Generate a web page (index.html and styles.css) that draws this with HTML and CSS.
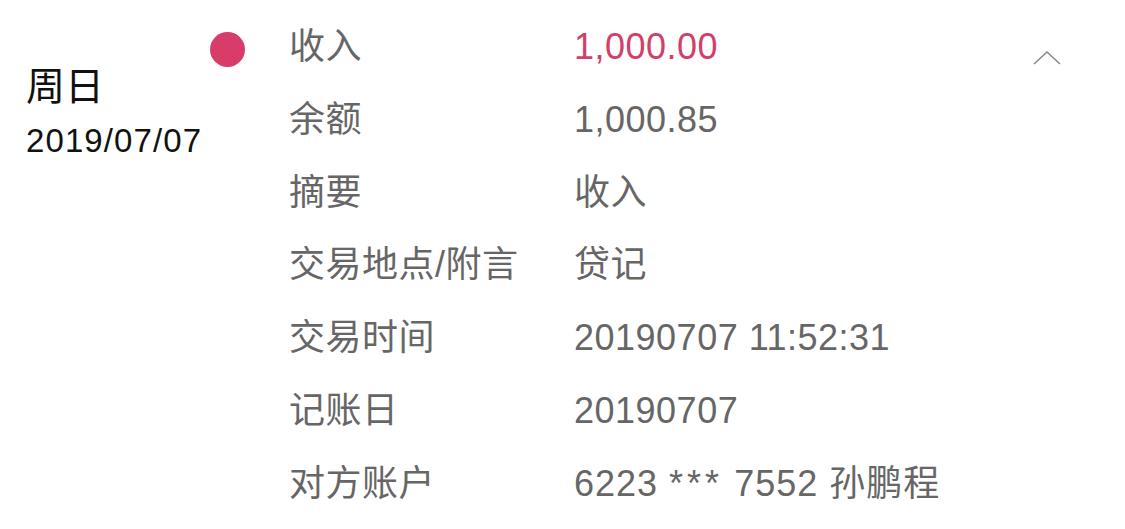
FILE: index.html
```html
<!DOCTYPE html>
<html lang="zh">
<head>
<meta charset="utf-8">
<link rel="stylesheet" href="styles.css">
</head>
<body>
<div class="item">
  <div class="day">
    <div class="weekday">周日</div>
    <div class="date">2019/07/07</div>
  </div>
  <div class="marker"><span class="dot"></span></div>
  <div class="details">
    <div class="row"><span class="label">收入</span><span class="value income">1,000.00</span></div>
    <div class="row"><span class="label">余额</span><span class="value">1,000.85</span></div>
    <div class="row"><span class="label">摘要</span><span class="value">收入</span></div>
    <div class="row"><span class="label">交易地点/附言</span><span class="value">贷记</span></div>
    <div class="row"><span class="label">交易时间</span><span class="value">20190707 11:52:31</span></div>
    <div class="row"><span class="label">记账日</span><span class="value">20190707</span></div>
    <div class="row"><span class="label">对方账户</span><span class="value account">6223 <span class="stars">***</span> 7552 孙鹏程</span></div>
  </div>
  <div class="toggle">
    <svg width="28" height="16" viewBox="0 0 28 16"><polyline points="1,14 14,2 27,14" fill="none" stroke="#8a8a8a" stroke-width="1.6"/></svg>
  </div>
</div>
</body>
</html>
```
FILE: styles.css
```css
html, body {
  margin: 0;
  padding: 0;
  background: #ffffff;
}
body {
  font-family: "Liberation Sans", "Noto Sans CJK SC", sans-serif;
  width: 1125px;
  height: 529px;
  overflow: hidden;
}
.item {
  display: flex;
  align-items: flex-start;
}
.day {
  width: 184px;
  padding-left: 26px;
  padding-top: 61px;
  color: #111;
}
.weekday {
  font-size: 39px;
  line-height: 52px;
}
.date {
  font-size: 33px;
  letter-spacing: 1.1px;
  line-height: 40px;
  margin-top: 8px;
}
.marker {
  width: 79px;
  padding-top: 32px;
}
.dot {
  display: block;
  width: 35px;
  height: 35px;
  border-radius: 50%;
  background: #d83c68;
}
.details {
  width: 712px;
  padding-top: 11px;
}
.row {
  display: flex;
  height: 72.8px;
  align-items: flex-start;
  font-size: 36px;
  letter-spacing: 0.5px;
  line-height: 72.8px;
  color: #666666;
}
.label {
  width: 285px;
  flex: none;
}
.value.income {
  color: #d23f6a;
}
.value.account {
  letter-spacing: 1px;
}
.stars {
  letter-spacing: 4px;
}
.toggle {
  padding-top: 50px;
  margin-left: 32px;
}
```
